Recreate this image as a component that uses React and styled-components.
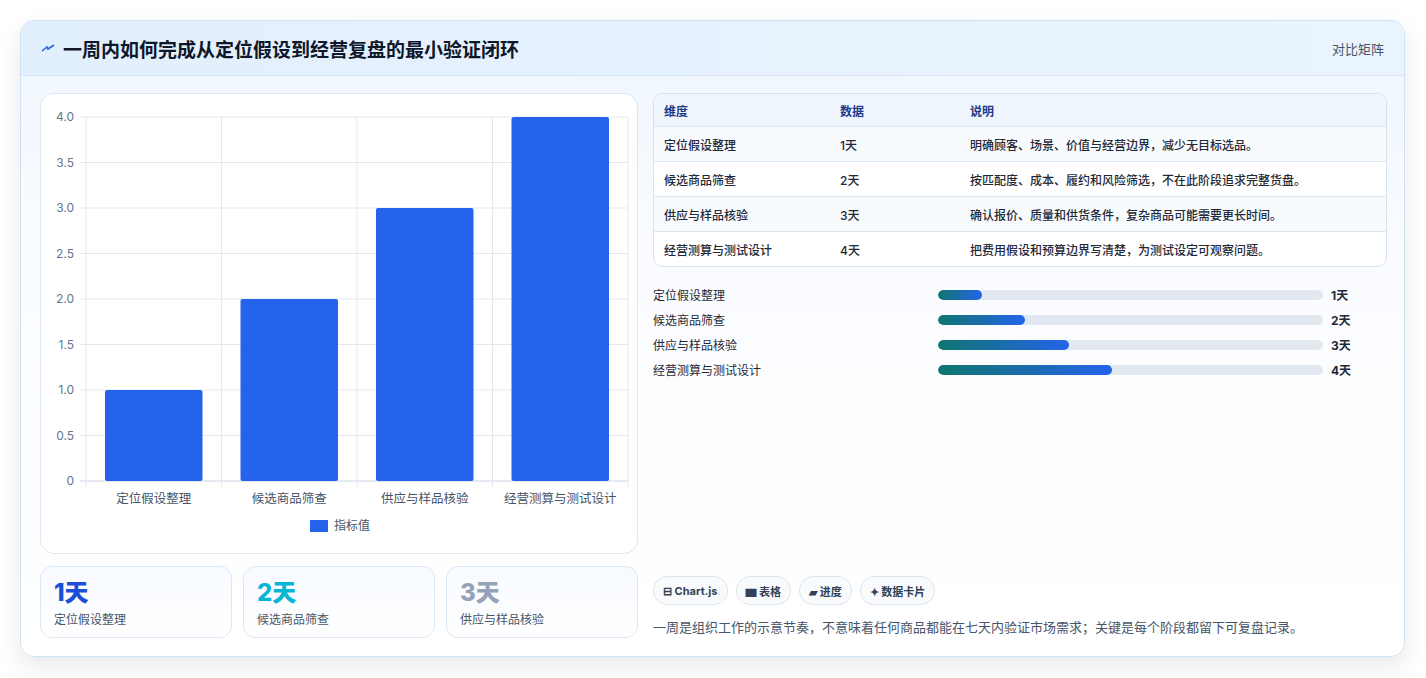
import React from 'react';
import styled, { createGlobalStyle } from 'styled-components';

const Global = createGlobalStyle`
  body { margin: 0; background: #fff; font-family: Inter, "Noto Sans CJK SC", sans-serif; }
`;

const Page = styled.div`
  padding: 20px 20px 20px 20px;
  height: 678px;
  box-sizing: border-box;
`;

const Card = styled.div`
  width: 1385px;
  height: 637px;
  box-sizing: border-box;
  border: 1px solid #cfe3f3;
  border-radius: 14px;
  background: linear-gradient(180deg, #eef6fe 0%, #fbfcff 40%, #ffffff 100%);
  box-shadow: 0 10px 24px rgba(30, 41, 59, 0.10);
  overflow: hidden;
  display: flex;
  flex-direction: column;
`;

const Header = styled.div`
  height: 55px;
  display: flex;
  align-items: center;
  justify-content: space-between;
  padding: 0 20px;
  background: linear-gradient(90deg, #e2effc, #eaf4fe);
  border-bottom: 1px solid #d6e6f5;
`;

const Title = styled.h1`
  margin: 0;
  display: flex;
  align-items: center;
  gap: 8px;
  font-size: 19px;
  font-weight: 700;
  color: #0f172a;
`;

const Tag = styled.div`
  font-size: 13px;
  color: #475569;
`;

const Body = styled.div`
  display: grid;
  grid-template-columns: 598px 734px;
  gap: 15px;
  padding: 17px 18px 18px 19px;
  flex: 1;
`;

const Col = styled.div`
  display: flex;
  flex-direction: column;
  gap: 12px;
`;

const ChartBox = styled.div`
  height: 461px;
  border: 1px solid #dde7f1;
  border-radius: 14px;
  background: #fff;
  box-sizing: border-box;
`;

const Stats = styled.div`
  display: grid;
  grid-template-columns: repeat(3, 1fr);
  gap: 11px;
`;

const Stat = styled.div`
  height: 72px;
  box-sizing: border-box;
  border: 1px solid #dbe7f4;
  border-radius: 12px;
  background: linear-gradient(180deg, #f7faff, #ffffff);
  padding: 12px 13px;
`;

const StatValue = styled.div`
  font-size: 24px;
  font-weight: 800;
  line-height: 28px;
  color: ${p => p.color};
`;

const StatLabel = styled.div`
  font-size: 12px;
  color: #475569;
  margin-top: 3px;
`;

const Table = styled.div`
  border: 1px solid #d6e2ee;
  border-radius: 10px;
  overflow: hidden;
  background: #fff;
`;

const Row = styled.div`
  display: grid;
  grid-template-columns: 176px 130px 1fr;
  height: ${p => (p.head ? 32 : 34)}px;
  align-items: center;
  padding-left: 10px;
  font-size: 12px;
  font-weight: ${p => (p.head ? 700 : 500)};
  color: ${p => (p.head ? '#1e3a8a' : '#1f2937')};
  background: ${p => (p.head ? '#eef5fd' : p.odd ? '#f8fbfe' : '#fff')};
  border-top: ${p => (p.head ? 'none' : '1px solid #dbe6f0')};
`;

const Bars = styled.div`
  display: flex;
  flex-direction: column;
  gap: 11px;
  margin-top: 7px;
`;

const BarRow = styled.div`
  display: grid;
  grid-template-columns: 277px 385px 40px;
  align-items: center;
  gap: 8px;
  height: 14px;
  font-size: 12px;
  color: #1f2937;
`;

const Track = styled.div`
  height: 10px;
  border-radius: 5px;
  background: #e2e8f0;
  overflow: hidden;
`;

const Fill = styled.div`
  height: 100%;
  border-radius: 5px;
  background: linear-gradient(90deg, #0f766e, #2563eb);
`;

const BarVal = styled.div`
  font-weight: 700;
`;

const Spacer = styled.div`
  flex: 1;
`;

const Chips = styled.div`
  display: flex;
  gap: 8px;
`;

const Chip = styled.div`
  height: 27px;
  padding: 0 9px;
  display: flex;
  align-items: center;
  border: 1px solid #dde6ef;
  border-radius: 14px;
  background: #f8fafc;
  font-size: 11px;
  font-weight: 700;
  color: #334155;
`;

const Note = styled.p`
  margin: 0 0 2px;
  font-size: 13px;
  color: #475569;
`;

const cats = ['定位假设整理', '候选商品筛查', '供应与样品核验', '经营测算与测试设计'];
const rows = [
  ['定位假设整理', '1天', '明确顾客、场景、价值与经营边界，减少无目标选品。'],
  ['候选商品筛查', '2天', '按匹配度、成本、履约和风险筛选，不在此阶段追求完整货盘。'],
  ['供应与样品核验', '3天', '确认报价、质量和供货条件，复杂商品可能需要更长时间。'],
  ['经营测算与测试设计', '4天', '把费用假设和预算边界写清楚，为测试设定可观察问题。'],
];

function Chart() {
  const x0 = 45, x1 = 587, y0 = 23, y1 = 387;
  const cw = (x1 - x0) / 4;
  const yOf = v => y1 - (v / 4) * (y1 - y0);
  const ticks = [0, 0.5, 1, 1.5, 2, 2.5, 3, 3.5, 4];
  return (
    <svg width="596" height="459" fontFamily='Inter, "Noto Sans CJK SC", sans-serif'>
      {ticks.map(t => (
        <g key={t}>
          <line x1={x0 - 6} x2={x1} y1={yOf(t)} y2={yOf(t)} stroke={t === 0 ? '#cbd5e1' : '#e5e9ef'} />
          <text x={x0 - 12} y={yOf(t) + 4} fontSize="12" fill="#64748b" textAnchor="end">
            {t === 0 ? '0' : t.toFixed(1)}
          </text>
        </g>
      ))}
      {[0, 1, 2, 3, 4].map(i => (
        <line key={i} x1={x0 + i * cw} x2={x0 + i * cw} y1={y0} y2={y1 + 6} stroke="#e5e9ef" />
      ))}
      {cats.map((c, i) => (
        <g key={c}>
          <rect x={x0 + i * cw + 19} y={yOf(i + 1)} width={cw - 38} height={y1 - yOf(i + 1)} rx="2" fill="#2563eb" />
          <text x={x0 + i * cw + cw / 2} y={409} fontSize="12.5" fill="#475569" textAnchor="middle">{c}</text>
        </g>
      ))}
      <rect x="269" y="426" width="18" height="12" fill="#2563eb" />
      <text x="293" y="436" fontSize="12" fill="#475569">指标值</text>
    </svg>
  );
}

export default function App() {
  return (
    <Page>
      <Global />
      <Card>
        <Header>
          <Title>
            <svg width="14" height="10" viewBox="0 0 14 10">
              <path d="M1 8 L6 4 L7 6 L13 2" stroke="#2563eb" strokeWidth="1.6" fill="none" />
            </svg>
            一周内如何完成从定位假设到经营复盘的最小验证闭环
          </Title>
          <Tag>对比矩阵</Tag>
        </Header>
        <Body>
          <Col>
            <ChartBox><Chart /></ChartBox>
            <Stats>
              <Stat><StatValue color="#1d4ed8">1天</StatValue><StatLabel>定位假设整理</StatLabel></Stat>
              <Stat><StatValue color="#06b6d4">2天</StatValue><StatLabel>候选商品筛查</StatLabel></Stat>
              <Stat><StatValue color="#94a3b8">3天</StatValue><StatLabel>供应与样品核验</StatLabel></Stat>
            </Stats>
          </Col>
          <Col>
            <Table>
              <Row head><span>维度</span><span>数据</span><span>说明</span></Row>
              {rows.map((r, i) => (
                <Row key={r[0]} odd={i % 2 === 0}><span>{r[0]}</span><span>{r[1]}</span><span>{r[2]}</span></Row>
              ))}
            </Table>
            <Bars>
              {rows.map((r, i) => (
                <BarRow key={r[0]}>
                  <span>{r[0]}</span>
                  <Track><Fill style={{ width: `${(i + 1) * 11.3}%` }} /></Track>
                  <BarVal>{r[1]}</BarVal>
                </BarRow>
              ))}
            </Bars>
            <Spacer />
            <Chips>
              <Chip>⊟ Chart.js</Chip>
              <Chip>▆ 表格</Chip>
              <Chip>▰ 进度</Chip>
              <Chip>✦ 数据卡片</Chip>
            </Chips>
            <Note>一周是组织工作的示意节奏，不意味着任何商品都能在七天内验证市场需求；关键是每个阶段都留下可复盘记录。</Note>
          </Col>
        </Body>
      </Card>
    </Page>
  );
}
